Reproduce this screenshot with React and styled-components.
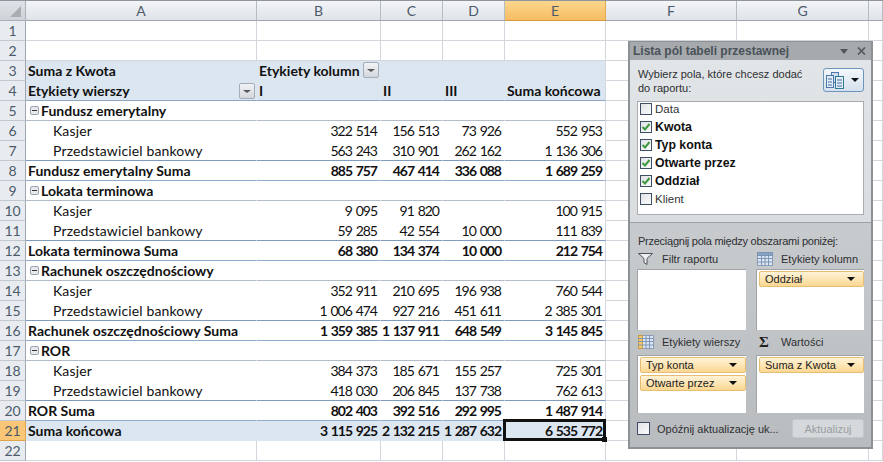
import React from 'react';
import styled, { createGlobalStyle } from 'styled-components';

const columns = ['A', 'B', 'C', 'D', 'E', 'F', 'G', ''];

const rows = [
    { n: 1 },
    { n: 2 },
    { n: 3, kind: 'head', a: 'Suma z Kwota', b: 'Etykiety kolumn', colFilter: true },
    { n: 4, kind: 'headLast', a: 'Etykiety wierszy', rowFilter: true, b: 'I', c: 'II', d: 'III', e: 'Suma końcowa' },
    { n: 5, kind: 'group', a: 'Fundusz emerytalny' },
    { n: 6, kind: 'item', a: 'Kasjer', b: '322 514', c: '156 513', d: '73 926', e: '552 953' },
    { n: 7, kind: 'itemLast', a: 'Przedstawiciel bankowy', b: '563 243', c: '310 901', d: '262 162', e: '1 136 306' },
    { n: 8, kind: 'sum', a: 'Fundusz emerytalny Suma', b: '885 757', c: '467 414', d: '336 088', e: '1 689 259' },
    { n: 9, kind: 'group', a: 'Lokata terminowa' },
    { n: 10, kind: 'item', a: 'Kasjer', b: '9 095', c: '91 820', d: '', e: '100 915' },
    { n: 11, kind: 'itemLast', a: 'Przedstawiciel bankowy', b: '59 285', c: '42 554', d: '10 000', e: '111 839' },
    { n: 12, kind: 'sum', a: 'Lokata terminowa Suma', b: '68 380', c: '134 374', d: '10 000', e: '212 754' },
    { n: 13, kind: 'group', a: 'Rachunek oszczędnościowy' },
    { n: 14, kind: 'item', a: 'Kasjer', b: '352 911', c: '210 695', d: '196 938', e: '760 544' },
    { n: 15, kind: 'itemLast', a: 'Przedstawiciel bankowy', b: '1 006 474', c: '927 216', d: '451 611', e: '2 385 301' },
    { n: 16, kind: 'sum', a: 'Rachunek oszczędnościowy Suma', b: '1 359 385', c: '1 137 911', d: '648 549', e: '3 145 845' },
    { n: 17, kind: 'group', a: 'ROR' },
    { n: 18, kind: 'item', a: 'Kasjer', b: '384 373', c: '185 671', d: '155 257', e: '725 301' },
    { n: 19, kind: 'itemLast', a: 'Przedstawiciel bankowy', b: '418 030', c: '206 845', d: '137 738', e: '762 613' },
    { n: 20, kind: 'sum', a: 'ROR Suma', b: '802 403', c: '392 516', d: '292 995', e: '1 487 914' },
    { n: 21, kind: 'total', a: 'Suma końcowa', b: '3 115 925', c: '2 132 215', d: '1 287 632', e: '6 535 772' },
    { n: 22 },
];

const fields = [
    { name: 'Data' },
    { name: 'Kwota', on: true },
    { name: 'Typ konta', on: true },
    { name: 'Otwarte przez', on: true },
    { name: 'Oddział', on: true },
    { name: 'Klient' },
];

const GridIcon = () => (
    <svg width="16" height="14" viewBox="0 0 16 14">
        <rect x="0.5" y="0.5" width="15" height="13" fill="#dbe6f4" stroke="#8f9fb5" />
        <rect x="0.5" y="0.5" width="15" height="3" fill="#8ba6cc" stroke="#7e92ae" />
        <path d="M4.5 0v14M8 0v14M11.5 0v14M0 6.5h16M0 10h16" stroke="#7f95b5" strokeWidth="1" />
    </svg>
);

const RowGridIcon = () => (
    <svg width="16" height="14" viewBox="0 0 16 14">
        <rect x="0.5" y="0.5" width="15" height="13" fill="#dbe6f4" stroke="#8f9fb5" />
        <rect x="0.5" y="0.5" width="4" height="13" fill="#f0c66e" stroke="#c79a45" />
        <path d="M8 0v14M11.5 0v14M0 3.5h16M0 6.5h16M0 10h16" stroke="#7f95b5" strokeWidth="1" />
    </svg>
);

const FunnelIcon = () => (
    <svg width="15" height="12" viewBox="0 0 15 12">
        <path d="M0.5 0.5h14L9 5.5v6l-3-2v-4z" fill="#eceef0" stroke="#4e5257" strokeWidth="1" />
    </svg>
);

const FieldsIcon = () => (
    <svg width="18" height="17" viewBox="0 0 18 17">
        <rect x="5.5" y="0.5" width="7" height="10" fill="#cfe0f3" stroke="#4c77a8" />
        <rect x="0.5" y="3.5" width="7" height="12" fill="#e5eef8" stroke="#4c77a8" />
        <rect x="9.5" y="4.5" width="8" height="12" fill="#e5eef8" stroke="#2f7a8e" />
        <path d="M2 7h4M2 10h4M2 13h4M11 8h5M11 11h5M11 14h5" stroke="#3f6ea3" strokeWidth="1" />
    </svg>
);

export default function App() {
    return (
        <>
            <GlobalStyle />
            <Sheet>
                <HeaderRow>
                    <Corner />
                    {columns.map((col, i) => (
                        <ColHeader key={i} $active={col === 'E'}>{col}</ColHeader>
                    ))}
                </HeaderRow>
                {rows.map((row) => (
                    <SheetRow key={row.n} row={row} />
                ))}
                <FieldPanel />
            </Sheet>
        </>
    );
}

function SheetRow({ row }) {
    const { kind } = row;
    const strong = kind && kind !== 'item' && kind !== 'itemLast';
    const isNumeric = kind && kind !== 'head' && kind !== 'headLast' && kind !== 'group';
    return (
        <Row>
            <RowHeader $active={row.n === 21}>{row.n}</RowHeader>
            <Cell $kind={kind} $strong={strong} $indent={kind === 'item' || kind === 'itemLast' ? 27 : 2}>
                {kind === 'group' && <Collapse />}
                {row.a}
                {row.rowFilter && <FilterButton $top={2} />}
            </Cell>
            {['b', 'c', 'd', 'e'].map((key) => (
                <Cell
                    key={key}
                    $kind={kind}
                    $strong={strong}
                    $num={isNumeric}
                    $edge={key === 'e'}
                    $selected={row.n === 21 && key === 'e'}
                >
                    {row[key]}
                    {row.colFilter && key === 'b' && <FilterButton $top={1} />}
                </Cell>
            ))}
            <Cell />
            <Cell />
            <Cell />
        </Row>
    );
}

function FieldPanel() {
    return (
        <Panel>
            <TitleBar>
                <span>Lista pól tabeli przestawnej</span>
                <TitleTools>
                    <TitleArrow />
                    <svg width="9" height="8" viewBox="0 0 9 8">
                        <path d="M1 0.5l7 7M8 0.5l-7 7" stroke="#555b61" strokeWidth="1.7" />
                    </svg>
                </TitleTools>
            </TitleBar>
            <UpperBody>
                <PickRow>
                    <PickText>Wybierz pola, które chcesz dodać<br />do raportu:</PickText>
                    <LayoutButton>
                        <FieldsIcon />
                        <SmallArrow />
                    </LayoutButton>
                </PickRow>
                <FieldList>
                    {fields.map((f) => (
                        <FieldRow key={f.name} $on={f.on}>
                            <CheckBox>
                                {f.on && (
                                    <svg width="10" height="10" viewBox="0 0 10 10">
                                        <path d="M1.5 5l2.5 2.5L8.5 2" fill="none" stroke="#3f9a3f" strokeWidth="2" />
                                    </svg>
                                )}
                            </CheckBox>
                            {f.name}
                        </FieldRow>
                    ))}
                </FieldList>
            </UpperBody>
            <LowerBody>
                <DragHint>Przeciągnij pola między obszarami poniżej:</DragHint>
                <Areas>
                    <Area>
                        <AreaTitle><AreaIcon><FunnelIcon /></AreaIcon><span>Filtr raportu</span></AreaTitle>
                        <AreaBox />
                    </Area>
                    <Area>
                        <AreaTitle><AreaIcon><GridIcon /></AreaIcon><span>Etykiety kolumn</span></AreaTitle>
                        <AreaBox><Chip>Oddział<SmallArrow /></Chip></AreaBox>
                    </Area>
                    <Area>
                        <AreaTitle $low><AreaIcon><RowGridIcon /></AreaIcon><span>Etykiety wierszy</span></AreaTitle>
                        <AreaBox $low>
                            <Chip>Typ konta<SmallArrow /></Chip>
                            <Chip>Otwarte przez<SmallArrow /></Chip>
                        </AreaBox>
                    </Area>
                    <Area>
                        <AreaTitle $low><AreaIcon><Sigma>Σ</Sigma></AreaIcon><span>Wartości</span></AreaTitle>
                        <AreaBox $low><Chip>Suma z Kwota<SmallArrow /></Chip></AreaBox>
                    </Area>
                </Areas>
                <FooterRow>
                    <CheckBox $large />
                    <DeferText>Opóźnij aktualizację uk...</DeferText>
                    <UpdateButton>Aktualizuj</UpdateButton>
                </FooterRow>
            </LowerBody>
        </Panel>
    );
}

const GlobalStyle = createGlobalStyle`
    html, body {
        margin: 0;
        padding: 0;
        width: 883px;
        height: 462px;
        overflow: hidden;
        background: #fff;
    }
`;

const gridColumns = '26px 231px 124px 62px 62px 101px 131px 132px 14px';
const gridLine = '#d3d7dd';

const Sheet = styled.div`
    position: relative;
    width: 883px;
    height: 462px;
    overflow: hidden;
    font-family: Lato, 'Liberation Sans', sans-serif;
    color: #111;
`;

const HeaderRow = styled.div`
    display: grid;
    grid-template-columns: ${gridColumns};
    height: 21px;
    border-top: 1px solid #8f959c;
    box-sizing: border-box;
`;

const Corner = styled.div`
    position: relative;
    background: linear-gradient(#dfe3e7, #cfd3d8);
    border-right: 1px solid #a9b0b8;
    border-bottom: 1px solid #a9b0b8;
    &::after {
        content: '';
        position: absolute;
        right: 4px;
        bottom: 3px;
        border-style: solid;
        border-width: 0 0 11px 11px;
        border-color: transparent transparent #a9aeb3 transparent;
    }
`;

const ColHeader = styled.div`
    display: flex;
    align-items: center;
    justify-content: center;
    box-sizing: border-box;
    font-size: 14px;
    color: #4c5a6b;
    background: ${(p) => (p.$active ? 'linear-gradient(#fbd68e, #f6bd62)' : 'linear-gradient(#f3f5f7, #dfe3e8)')};
    border-right: 1px solid ${(p) => (p.$active ? '#e3a94e' : '#b5bbc3')};
    border-bottom: 1px solid ${(p) => (p.$active ? '#d99a3c' : '#9ea5ae')};
`;

const Row = styled.div`
    display: grid;
    grid-template-columns: ${gridColumns};
    height: 20px;
`;

const RowHeader = styled.div`
    display: flex;
    align-items: center;
    justify-content: center;
    box-sizing: border-box;
    font-size: 14px;
    color: #4c5a6b;
    background: ${(p) => (p.$active ? '#f8c675' : '#e8ecf0')};
    border-right: 1px solid ${(p) => (p.$active ? '#e0a54a' : '#9ea5ae')};
    border-bottom: 1px solid ${(p) => (p.$active ? '#e0a54a' : '#c3c8ce')};
`;

const kindBackground = { head: '#dce6f1', headLast: '#dce6f1', total: '#dce6f1' };
const kindBorder = {
    head: '#dce6f1',
    headLast: '#8fa7c4',
    group: '#b4bcc8',
    item: '#fff',
    itemLast: '#7f9cc0',
    sum: '#8fabcd',
    total: '#dce6f1',
};

const Cell = styled.div`
    position: relative;
    ${(p) => p.$selected && 'z-index: 1;'}
    display: flex;
    align-items: center;
    box-sizing: border-box;
    white-space: nowrap;
    font-size: 14px;
    padding: 0 3px 0 ${(p) => p.$indent ?? 2}px;
    font-weight: ${(p) => (p.$strong ? 700 : 400)};
    letter-spacing: ${(p) => (p.$num ? '-1px' : p.$strong ? '0' : '0.13px')};
    word-spacing: ${(p) => (p.$num ? '1.2px' : '0')};
    justify-content: ${(p) => (p.$num ? 'flex-end' : 'flex-start')};
    background: ${(p) => kindBackground[p.$kind] || '#fff'};
    border-bottom: 1px solid ${(p) => kindBorder[p.$kind] || gridLine};
    border-right: 1px solid ${(p) => (p.$kind && !p.$edge ? 'transparent' : gridLine)};
    ${(p) => p.$selected && `
        &::before {
            content: '';
            position: absolute;
            left: -2px;
            top: -2px;
            right: -1px;
            bottom: -1px;
            border: 3px solid #111;
        }
        &::after {
            content: '';
            position: absolute;
            right: -2px;
            bottom: -2px;
            width: 5px;
            height: 5px;
            background: #111;
        }
    `}
`;

const Collapse = styled.span`
    position: relative;
    flex: none;
    box-sizing: border-box;
    width: 9px;
    height: 9px;
    margin: 0 2px 0 2px;
    background: #e6eaef;
    border: 1px solid #9aa4b0;
    border-radius: 2px;
    &::after {
        content: '';
        position: absolute;
        left: 1px;
        right: 1px;
        top: 3px;
        height: 1px;
        background: #333;
    }
`;

const FilterButton = styled.span`
    position: absolute;
    top: ${(p) => p.$top}px;
    right: 1px;
    width: 16px;
    height: 16px;
    box-sizing: border-box;
    background: linear-gradient(#f2f3f5, #d3d7dc);
    border: 1px solid #a3adba;
    border-radius: 2px;
    &::after {
        content: '';
        position: absolute;
        left: 3px;
        top: 6px;
        border-style: solid;
        border-width: 3px 4px 0 4px;
        border-color: #555 transparent transparent transparent;
    }
`;

const Panel = styled.aside`
    position: absolute;
    left: 628px;
    top: 41px;
    z-index: 2;
    width: 245px;
    height: 408px;
    box-sizing: border-box;
    display: flex;
    flex-direction: column;
    border: 2px solid #8d9194;
    border-top-width: 1px;
    background: #dfe3e6;
    font-family: 'Liberation Sans', Arial, sans-serif;
    font-size: 11px;
    color: #2d2f31;
`;

const TitleBar = styled.div`
    display: flex;
    align-items: center;
    justify-content: space-between;
    height: 18px;
    padding: 0 5px 0 3px;
    background: #a6aaad;
    color: #4a5159;
    font-weight: 700;
    font-size: 12px;
    flex: none;
`;

const TitleTools = styled.div`
    display: flex;
    align-items: center;
    gap: 9px;
`;

const TitleArrow = styled.span`
    border-style: solid;
    border-width: 5px 4.5px 0 4.5px;
    border-color: #50565c transparent transparent transparent;
`;

const UpperBody = styled.div`
    flex: none;
    height: 163px;
    box-sizing: border-box;
    padding: 8px 7px 0 7px;
    background: linear-gradient(#e2e5e8, #d9dde0);
    border-bottom: 1px solid #9da1a5;
`;

const PickRow = styled.div`
    display: flex;
    justify-content: space-between;
    align-items: flex-start;
`;

const PickText = styled.div`
    line-height: 14px;
    margin-top: -1px;
    padding-left: 1px;
    white-space: nowrap;
`;

const LayoutButton = styled.div`
    display: flex;
    align-items: center;
    gap: 7px;
    box-sizing: border-box;
    width: 41px;
    height: 24px;
    padding-left: 2px;
    border: 1px solid #6f93bb;
    border-radius: 3px;
    background: linear-gradient(#f3f7fb, #d5e1ee);
`;

const SmallArrow = styled.span`
    border-style: solid;
    border-width: 4px 4px 0 4px;
    border-color: #111 transparent transparent transparent;
`;

const FieldList = styled.div`
    margin-top: 6px;
    height: 114px;
    box-sizing: border-box;
    padding: 0 2px;
    background: #fff;
    border: 1px solid #a8acb0;
`;

const FieldRow = styled.div`
    display: flex;
    align-items: center;
    gap: 3px;
    height: 18px;
    font-size: ${(p) => (p.$on ? 12.3 : 11.5)}px;
    font-weight: ${(p) => (p.$on ? 700 : 400)};
    color: ${(p) => (p.$on ? '#111' : '#333')};
    &:first-child {
        margin-top: -2px;
    }
`;

const CheckBox = styled.span`
    display: inline-flex;
    align-items: center;
    justify-content: center;
    box-sizing: border-box;
    flex: none;
    width: ${(p) => (p.$large ? 13 : 12)}px;
    height: ${(p) => (p.$large ? 13 : 12)}px;
    border: 1px solid #3f4f63;
    background: linear-gradient(135deg, #e0e3e6, #fbfbfc);
`;

const LowerBody = styled.div`
    flex: 1;
    display: flex;
    flex-direction: column;
    box-sizing: border-box;
    padding: 11px 7px 0 7px;
    background: linear-gradient(#c8cbce, #b9bcbf);
`;

const DragHint = styled.div`
    line-height: 14px;
    padding-left: 1px;
    white-space: nowrap;
    letter-spacing: -0.25px;
`;

const Areas = styled.div`
    display: grid;
    grid-template-columns: 109px 108px;
    justify-content: space-between;
    row-gap: 1px;
`;

const Area = styled.div`
    display: flex;
    flex-direction: column;
`;

const AreaTitle = styled.div`
    display: flex;
    align-items: center;
    height: ${(p) => (p.$low ? 24 : 21)}px;
    box-sizing: border-box;
    padding-bottom: ${(p) => (p.$low ? 2 : 0)}px;
    white-space: nowrap;
`;

const AreaIcon = styled.span`
    display: flex;
    align-items: center;
    width: 25px;
    flex: none;
    padding-left: 1px;
    box-sizing: border-box;
`;

const Sigma = styled.span`
    width: 14px;
    text-align: center;
    font-family: 'Liberation Serif', serif;
    font-weight: 700;
    font-size: 15px;
    color: #222;
`;

const AreaBox = styled.div`
    display: flex;
    flex-direction: column;
    gap: 2px;
    height: ${(p) => (p.$low ? 58 : 61)}px;
    box-sizing: border-box;
    padding: 1px 0 0 2px;
    background: #fff;
    border: 1px solid #a0a4a8;
    border-width: 1px 0 0 1px;
`;

const Chip = styled.div`
    display: flex;
    align-items: center;
    justify-content: space-between;
    height: 16px;
    flex: none;
    box-sizing: border-box;
    padding: 0 8px 0 5px;
    background: linear-gradient(#fff3d8, #fbd892);
    border: 1px solid #e6bd73;
    border-radius: 2px;
    color: #222;
`;

const FooterRow = styled.div`
    display: flex;
    align-items: center;
    gap: 7px;
    margin-top: 6px;
    height: 19px;
`;

const DeferText = styled.span`
    flex: 1;
    white-space: nowrap;
`;

const UpdateButton = styled.div`
    display: flex;
    align-items: center;
    justify-content: center;
    box-sizing: border-box;
    width: 72px;
    height: 19px;
    border-radius: 3px;
    border: 1px solid #c6c9cc;
    background: #d6d9dc;
    color: #999da1;
`;
